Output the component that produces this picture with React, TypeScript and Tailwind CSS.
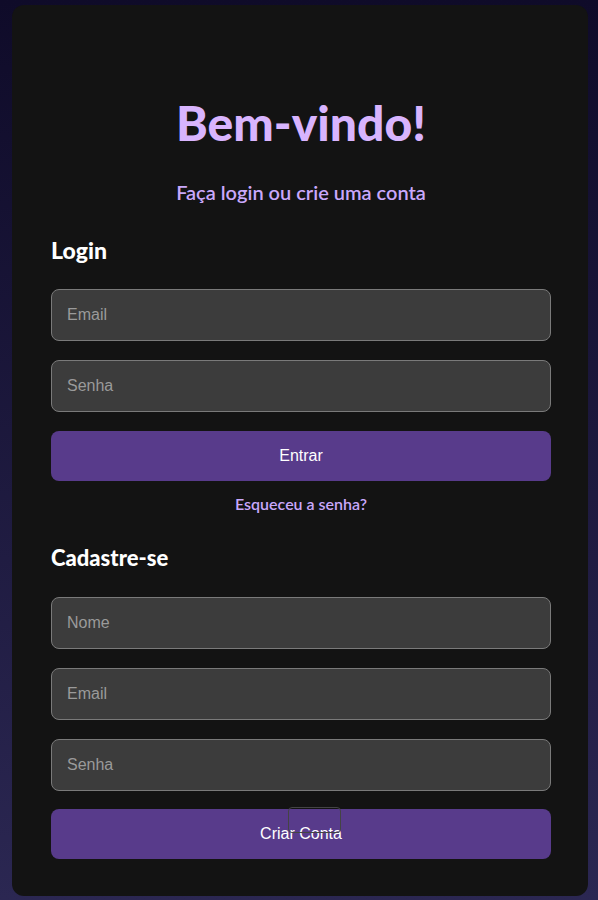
import { useState } from "react";

const heading = "font-['Lato','Noto_Sans',sans-serif]";

function Field({ placeholder, type = "text" }: { placeholder: string; type?: string }) {
  const [value, setValue] = useState("");
  return (
    <input
      type={type}
      value={value}
      onChange={(e) => setValue(e.target.value)}
      placeholder={placeholder}
      className="block w-full h-[52px] rounded-lg border border-[#7a7a7a] bg-[#3c3c3c] px-[15px] text-base text-white placeholder:text-[#9a9a9a] outline-none font-['Liberation_Sans',Arial,sans-serif]"
    />
  );
}

export default function App() {
  return (
    <div className="min-h-screen w-full bg-gradient-to-b from-[#0f0b29] to-[#2b2752] pt-[5px] pb-[4px]">
      <div className="ml-[12px] w-[576px] h-[891px] rounded-xl bg-[#131313] pl-[39px] pr-[37px] pt-[90px]">
        {/* cabeçalho */}
        <h1 className={`${heading} text-center text-[48px] leading-[56px] font-black text-[#d8b4fe]`}>
          Bem-vindo!
        </h1>
        <p className={`${heading} mt-[27px] text-center text-[20px] leading-[28px] font-semibold text-[#c9a8fb]`}>
          Faça login ou crie uma conta
        </p>

        {/* login */}
        <h2 className={`${heading} mt-[29px] text-[23px] leading-[30px] font-black text-white`}>Login</h2>
        <div className="mt-[24px] flex flex-col gap-[19px]">
          <Field placeholder="Email" type="email" />
          <Field placeholder="Senha" type="password" />
          <button className="h-[50px] w-full rounded-lg bg-[#583b8b] text-base text-white font-['Liberation_Sans',Arial,sans-serif]">
            Entrar
          </button>
        </div>
        <p className={`${heading} mt-[13px] text-center text-[16px] leading-[20px] font-semibold text-[#c9a8fb]`}>
          Esqueceu a senha?
        </p>

        {/* cadastro */}
        <h2 className={`${heading} mt-[29px] text-[22px] leading-[30px] font-black text-white`}>Cadastre-se</h2>
        <div className="mt-[24px] flex flex-col gap-[19px]">
          <Field placeholder="Nome" />
          <Field placeholder="Email" type="email" />
          <Field placeholder="Senha" type="password" />
        </div>
        <div className="relative mt-[18px]">
          <button className="h-[50px] w-full rounded-lg bg-[#583b8b] text-base text-white font-['Liberation_Sans',Arial,sans-serif]">
            Criar Conta
          </button>
          <div className="absolute left-[237px] top-[-2px] h-[26px] w-[53px] rounded border border-[#444]" />
        </div>
      </div>
    </div>
  );
}
